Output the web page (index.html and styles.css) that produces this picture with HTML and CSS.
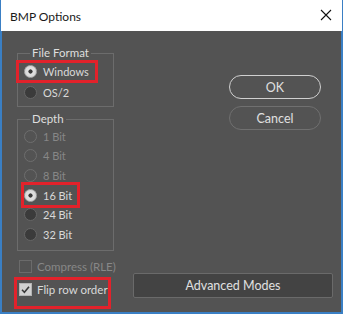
FILE: index.html
```html
<!DOCTYPE html>
<html lang="en">
<head>
  <meta charset="UTF-8" />
  <title>BMP Options</title>
  <link rel="stylesheet" href="styles.css">
</head>
<body>

<div class="window">
  <div class="titlebar">
    <span class="title">BMP Options</span>
    <svg class="close" width="12" height="12" viewBox="0 0 12 12">
      <path d="M1 1L11 11M11 1L1 11" stroke="#111" stroke-width="1.1" fill="none"/>
    </svg>
  </div>

  <div class="dialog">
    <div class="left">
      <div class="group format">
        <span class="legend">File Format</span>
        <div class="opt hl hl-windows"><span class="radio on"></span>Windows</div>
        <div class="opt"><span class="radio"></span>OS/2</div>
      </div>

      <div class="group depth">
        <span class="legend">Depth</span>
        <div class="opt off"><span class="radio"></span>1 Bit</div>
        <div class="opt off"><span class="radio"></span>4 Bit</div>
        <div class="opt off"><span class="radio"></span>8 Bit</div>
        <div class="opt hl hl-16"><span class="radio on"></span>16 Bit</div>
        <div class="opt"><span class="radio"></span>24 Bit</div>
        <div class="opt"><span class="radio"></span>32 Bit</div>
      </div>

      <div class="checks">
        <div class="chk off"><span class="box"></span>Compress (RLE)</div>
        <div class="chk hl hl-flip">
          <span class="box on">
            <svg width="13" height="13" viewBox="0 0 13 13">
              <path d="M3 6.8L5.4 9.2L10 3.8" stroke="#3a3a3a" stroke-width="1.6" fill="none"/>
            </svg>
          </span>Flip row order
        </div>
      </div>
    </div>

    <div class="right">
      <button class="pill primary">OK</button>
      <button class="pill">Cancel</button>
      <button class="advanced">Advanced Modes</button>
    </div>
  </div>
</div>

</body>
</html>
```

FILE: styles.css
```css
* {
  box-sizing: border-box;
}

body {
  margin: 0;
  font-family: Lato, 'Noto Sans', sans-serif;
  font-size: 11px;
  background: #535353;
}

.window {
  width: 343px;
  height: 314px;
  border: 2px solid #3a7fc4;
  border-top: none;
  background: #535353;
  display: flex;
  flex-direction: column;
}

.titlebar {
  height: 31px;
  margin: 0 -2px;
  padding: 0 10px 0 9px;
  background: #ffffff;
  display: flex;
  align-items: center;
  justify-content: space-between;
  color: #1a1a1a;
  font-size: 12px;
  border-left: 1px solid #3a7fc4;
  border-right: 1px solid #3a7fc4;
}

.title {
  margin-top: 1px;
}

.close {
  margin-top: -1px;
}

.dialog {
  flex: 1;
  display: grid;
  grid-template-columns: 110px 1fr;
  column-gap: 6px;
  padding: 22px 8px 13px 15px;
  color: #d9d9d9;
}

/* group boxes */
.group {
  position: relative;
  width: 97px;
  border: 1px solid #6c6c6c;
}

.format {
  height: 54px;
  padding-top: 7px;
}

.format .opt + .opt {
  margin-top: 1px;
}

.depth {
  height: 132px;
  margin-top: 12px;
  padding-top: 6.5px;
}

.depth .opt {
  height: 19.6px;
}

.legend {
  position: absolute;
  top: -10px;
  left: 12px;
  padding: 0 2px;
  background: #535353;
  color: #dedede;
  font-size: 11.5px;
  line-height: 18px;
}

.opt {
  position: relative;
  display: flex;
  align-items: center;
  gap: 6px;
  height: 20px;
  padding-left: 6px;
}

.opt.off, .chk.off {
  color: #878787;
}

.radio {
  width: 13px;
  height: 13px;
  border-radius: 50%;
  background: #3b3b3b;
  border: 1px solid #666666;
  flex-shrink: 0;
}

.off .radio {
  background: #535353;
  border-color: #6e6e6e;
}

.radio.on {
  background: radial-gradient(circle, #3a3a3a 0 1.8px, #e2e2e2 2.4px, #cfcfcf 100%);
  border-color: #a9a9a9;
}

/* checkboxes */
.checks {
  margin-top: 5px;
}

.chk {
  position: relative;
  display: flex;
  align-items: center;
  gap: 5px;
  height: 20px;
  padding-left: 2px;
  font-size: 11.5px;
}

.chk + .chk {
  margin-top: 3px;
}

.box {
  width: 13px;
  height: 13px;
  border: 1px solid #6b6b6b;
  flex-shrink: 0;
  display: flex;
}

.box.on {
  background: #d2d2d2;
  border-color: #b4b4b4;
}

.box svg {
  margin: -1px;
}

/* red annotation frames */
.hl::after {
  content: "";
  position: absolute;
  box-sizing: border-box;
  border: 3px solid #e2222b;
}

.hl-windows::after {
  left: -2px;
  top: -1px;
  width: 82px;
  height: 23px;
}

.hl-16::after {
  left: 3px;
  top: -3px;
  width: 59px;
  height: 26px;
}

.hl-flip::after {
  left: -3px;
  top: -2px;
  width: 97px;
  height: 32px;
}

/* buttons */
.right {
  display: flex;
  flex-direction: column;
  align-items: flex-end;
}

button {
  font-family: inherit;
  font-size: 12.5px;
  color: #e0e0e0;
  cursor: pointer;
}

.pill {
  width: 92px;
  height: 24px;
  margin-right: 12px;
  border-radius: 12px;
  background: transparent;
  border: 1px solid #707070;
  padding: 0;
}

.pill.primary {
  border: 1.5px solid #d0d0d0;
  margin-top: 22px;
  margin-bottom: 7px;
}

.advanced {
  margin-top: auto;
  width: 200px;
  height: 25px;
  margin-bottom: 1px;
  background: #434343;
  border: 1px solid #6a6a6a;
  border-radius: 2px;
  padding: 0;
}
```
